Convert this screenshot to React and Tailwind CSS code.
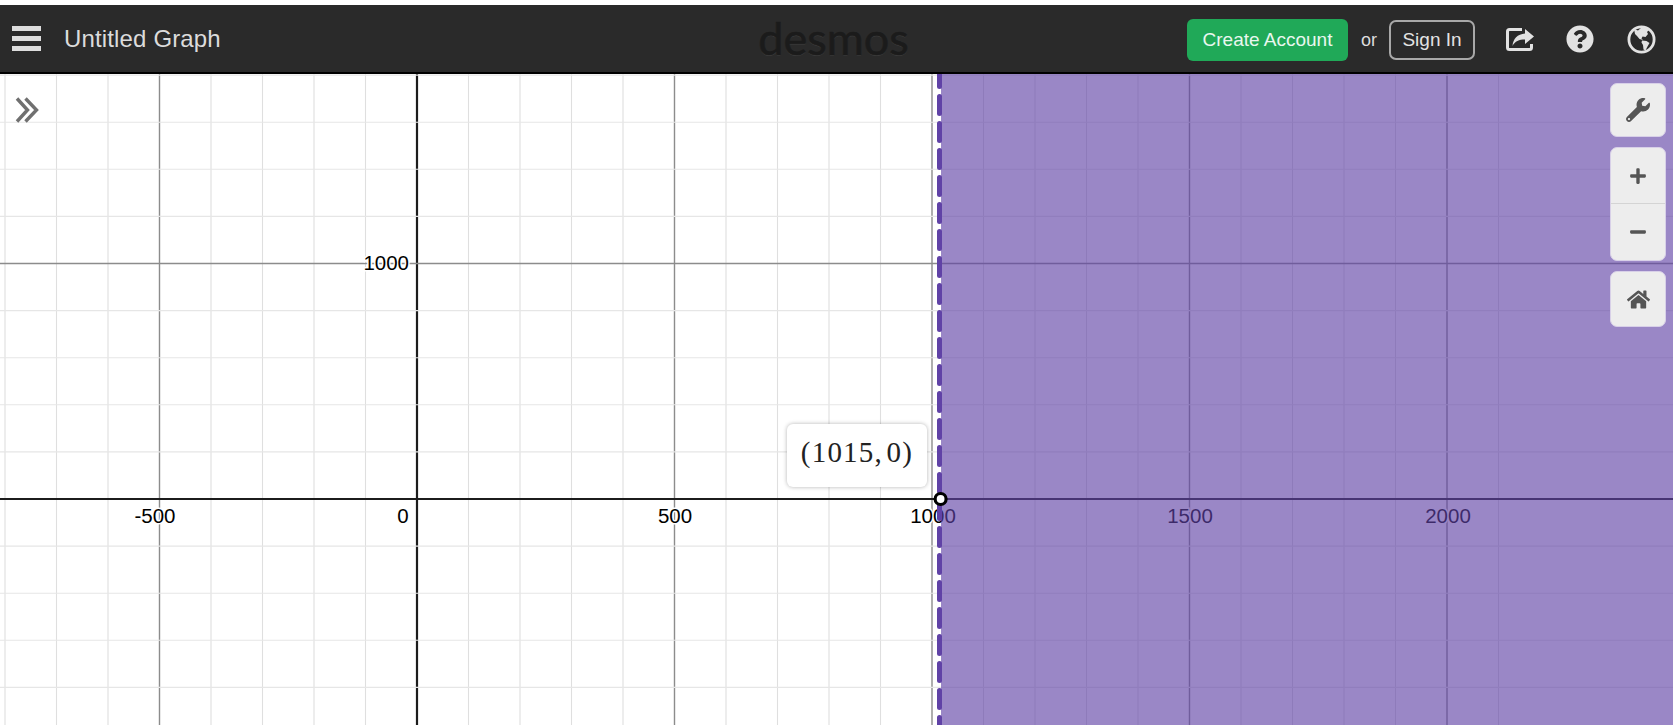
import React from "react";
import { FaQuestionCircle, FaWrench, FaPlus, FaMinus, FaHome } from "react-icons/fa";

const X0 = 417, Y0 = 499, DX = 51.5, DY = 47.1, TOP = 74;
const xs = Array.from({ length: 30 }, (_, i) => i - 8);
const ys = Array.from({ length: 14 }, (_, i) => i - 9);

const xLabels = [
  ["-500", 155],
  ["0", 403],
  ["500", 675],
  ["1000", 933],
  ["1500", 1190],
  ["2000", 1448],
];

function Graph() {
  const ay = Y0 - TOP;
  return (
    <svg width="1673" height="651" viewBox="0 0 1673 651" className="block">
      <rect width="1673" height="651" fill="#ffffff" />
      {xs.map((i) => {
        const x = X0 + i * DX;
        const axis = i === 0, major = i % 5 === 0;
        return (
          <line key={"v" + i} x1={x} x2={x} y1="0" y2="651"
            stroke={axis ? "#1c1c1c" : major ? "#8c8c8c" : "#dfdfdf"}
            strokeWidth={axis ? 2.2 : major ? 1.4 : 1.1} />
        );
      })}
      {ys.map((i) => {
        const y = ay + i * DY;
        const axis = i === 0, major = i % 5 === 0;
        return (
          <line key={"h" + i} y1={y} y2={y} x1="0" x2="1673"
            stroke={axis ? "#1c1c1c" : major ? "#8c8c8c" : "#e6e6e6"}
            strokeWidth={axis ? 2.2 : major ? 1.4 : 1.1} />
        );
      })}
      <g fontFamily="'Liberation Sans', Arial, sans-serif" fontSize="20.5" fill="#000" stroke="#fff" strokeWidth="3" style={{ paintOrder: "stroke" }}>
        {xLabels.map(([t, x]) => (
          <text key={t} x={x} y={ay + 24} textAnchor="middle">{t}</text>
        ))}
        <text x="409" y={263 - TOP + 7} textAnchor="end">1000</text>
      </g>
      <rect x="941" y="0" width="732" height="651" fill="#6042a6" fillOpacity="0.635" />
      <line x1="939.5" x2="939.5" y1="0" y2="651" stroke="#6042a6" strokeWidth="5" strokeLinecap="round" strokeDasharray="17 10" strokeDashoffset="4.5" />
      <circle cx="940.6" cy={ay} r="5.5" fill="#fff" stroke="#000" strokeWidth="3.2" />
    </svg>
  );
}

function ShareIcon() {
  return (
    <svg width="28" height="24" viewBox="0 0 28 24" fill="none">
      <path d="M16 1.5H3.5Q1.5 1.5 1.5 3.5V19.5Q1.5 21.5 3.5 21.5H23.5Q25.5 21.5 25.5 19.5V16" stroke="#e2e2e2" strokeWidth="3" />
      <path d="M19 1L28 8.5L19 16V11.5C13 11.5 9 13 6.5 18C7 11 11.5 6 19 5.5Z" fill="#e2e2e2" />
    </svg>
  );
}

function GlobeIcon() {
  return (
    <svg width="29" height="29" viewBox="0 0 29 29">
      <circle cx="14.5" cy="14.5" r="12.6" fill="none" stroke="#e2e2e2" strokeWidth="2.8" />
      <path d="M7 4L11 5.5L14 3L20 3L22 5L20 7L21 9L18.5 12L15.5 11.5L14.5 13.5L16 15L12.5 14L10 11L8 9Z" fill="#e2e2e2" />
      <path d="M15 15.5L19.5 16L22.5 18L20.5 21.5L18.5 25.5L16.5 24.5L16 20L14.5 17.5Z" fill="#e2e2e2" />
    </svg>
  );
}

function CtrlButton({ children, className = "" }) {
  return (
    <div className={"flex w-[54px] items-center justify-center text-[#555555] " + className}>
      {children}
    </div>
  );
}

export default function App() {
  return (
    <div className="flex h-[725px] w-[1673px] flex-col overflow-hidden bg-white pt-[5px] font-['Liberation_Sans',Arial,sans-serif]">
      <header className="grid h-[69px] shrink-0 grid-cols-[1fr_auto_1fr] items-center border-b-2 border-black bg-[#2a2a2a] pt-[3px]">
        <div className="mb-[4px] flex items-center gap-[24px] pl-[12px]">
          <div className="flex w-[29px] flex-col gap-[5px]">
            <span className="block h-[5px] bg-[#dddddd]"></span>
            <span className="block h-[5px] bg-[#dddddd]"></span>
            <span className="block h-[5px] bg-[#dddddd]"></span>
          </div>
          <span className="-ml-[1px] mt-[2px] text-[24px] leading-none tracking-[0.15px] text-[#dcdcdc]">Untitled Graph</span>
        </div>
        <div className="-ml-[6px] mb-[4px] font-['Lato',sans-serif] text-[45px] leading-none text-[#1b1b1b] [-webkit-text-stroke:0.7px_#1b1b1b] [text-shadow:0_1px_0_#3c3c3c]">desmos</div>
        <div className="flex items-center justify-end pr-[17px]">
          <div className="flex h-[42px] w-[161px] items-center justify-center rounded-[6px] bg-[#20a958] text-[19px] text-[#e9f7ef]">Create Account</div>
          <span className="ml-[13px] text-[18px] text-[#dddddd]">or</span>
          <div className="ml-[12px] flex h-[40px] w-[86px] items-center justify-center rounded-[7px] border-2 border-[#a8a8a8] text-[19px] text-[#e3e3e3]">Sign In</div>
          <div className="ml-[31px] flex items-center"><ShareIcon /></div>
          <div className="ml-[32px] mb-[2px] flex items-center"><FaQuestionCircle size={28} color="#e2e2e2" /></div>
          <div className="ml-[33px] mb-[2px] flex items-center"><GlobeIcon /></div>
        </div>
      </header>
      <main className="relative min-h-0 flex-1">
        <Graph />
        <svg width="24" height="26" viewBox="0 0 24 26" fill="none" className="absolute left-[15px] top-[23px]">
          <path d="M2 1.5L12.5 13L2 24.5M10.5 1.5L21.5 13L10.5 24.5" stroke="#707070" strokeWidth="3.4" />
        </svg>
        <div className="absolute left-[787px] top-[350px] flex h-[63px] w-[140px] items-center justify-center rounded-[6px] bg-white pb-[6px] font-['Liberation_Serif',serif] text-[29px] tracking-[1.2px] text-[#222222] shadow-[0_0_4px_rgba(0,0,0,0.3)]">(1015,&#8202;0)</div>
        <div className="absolute right-[7px] top-[9px] flex flex-col gap-[10px]">
          <div className="overflow-hidden rounded-[7px] border border-[#d8d0e8] bg-[#ededed]">
            <CtrlButton className="h-[52px]"><FaWrench size={24} /></CtrlButton>
          </div>
          <div className="overflow-hidden rounded-[7px] border border-[#d8d0e8] bg-[#ededed]">
            <CtrlButton className="h-[56px] border-b border-[#d4d4d4]"><FaPlus size={18} /></CtrlButton>
            <CtrlButton className="h-[56px]"><FaMinus size={18} /></CtrlButton>
          </div>
          <div className="overflow-hidden rounded-[7px] border border-[#d8d0e8] bg-[#ededed]">
            <CtrlButton className="h-[54px]"><FaHome size={23} /></CtrlButton>
          </div>
        </div>
      </main>
    </div>
  );
}
